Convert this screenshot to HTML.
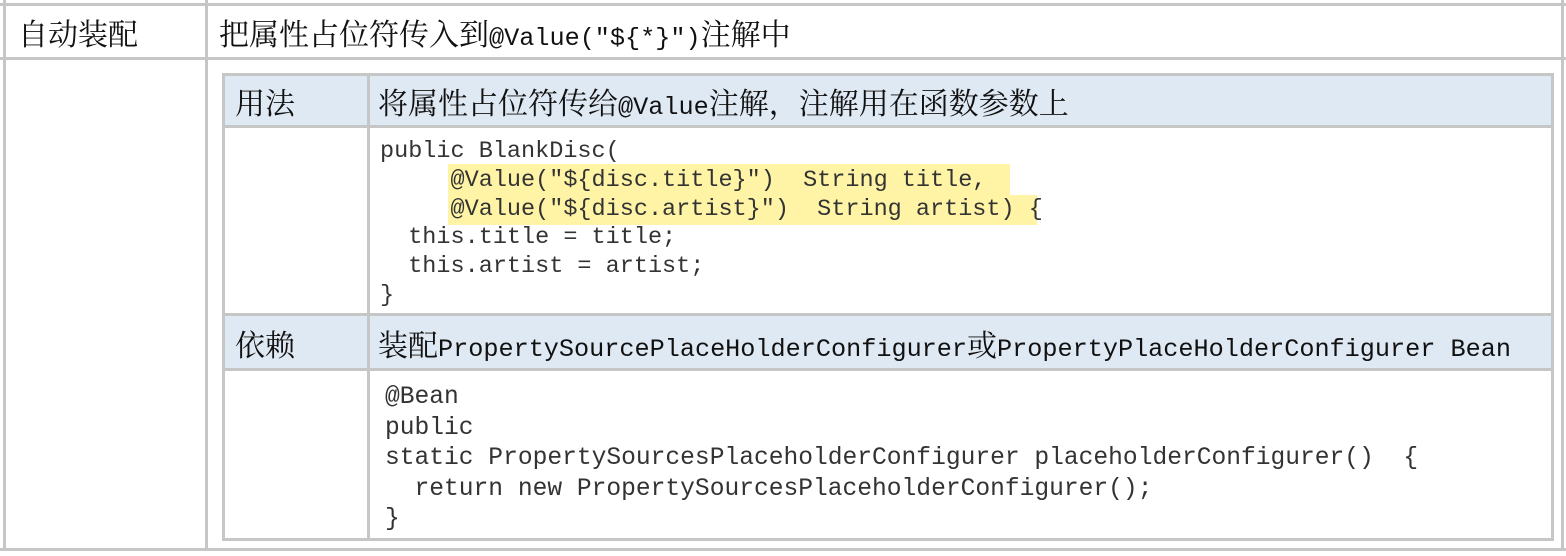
<!DOCTYPE html>
<html><head><meta charset="utf-8"><style>
body{margin:0;width:1566px;height:556px;background:#fff;position:relative;overflow:hidden;font-family:"Liberation Serif","Noto Serif CJK SC",serif;color:#111}
.b{position:absolute;background:#c6c6c6}
.t{position:absolute;font-size:30px;line-height:30px;white-space:pre;font-family:"Noto Serif CJK SC","Noto Sans CJK SC",serif}
.t .l{font-family:"Liberation Mono",monospace;font-size:25.2px}
.c{position:absolute;font-family:"Liberation Mono",monospace;white-space:pre;color:#333}
.hl{position:absolute;background:#fff4a6}
</style></head><body>
<div style="position:absolute;left:225px;top:76px;width:1326px;height:49px;background:#dfe9f4"></div>
<div style="position:absolute;left:225px;top:316px;width:1326px;height:52px;background:#dfe9f4"></div>
<div class="b" style="left:0;top:3px;width:1566px;height:3px"></div>
<div class="b" style="left:0;top:57px;width:1566px;height:3px"></div>
<div class="b" style="left:0;top:548px;width:1566px;height:3px"></div>
<div class="b" style="left:3px;top:0;width:3px;height:551px"></div>
<div class="b" style="left:205px;top:0;width:3px;height:551px"></div>
<div class="b" style="left:1561px;top:0;width:3px;height:551px"></div>
<div class="b" style="left:222px;top:73px;width:1332px;height:3px"></div>
<div class="b" style="left:222px;top:125px;width:1332px;height:3px"></div>
<div class="b" style="left:222px;top:313px;width:1332px;height:3px"></div>
<div class="b" style="left:222px;top:368px;width:1332px;height:3px"></div>
<div class="b" style="left:222px;top:538px;width:1332px;height:3px"></div>
<div class="b" style="left:222px;top:73px;width:3px;height:468px"></div>
<div class="b" style="left:367px;top:73px;width:3px;height:468px"></div>
<div class="b" style="left:1551px;top:73px;width:3px;height:468px"></div>
<div class="t" style="left:18px;top:17px">自动装配</div>
<div class="t" style="left:219px;top:17px">把属性占位符传入到<span class="l">@Value("${*}")</span>注解中</div>
<div class="t" style="left:235px;top:86px">用法</div>
<div class="t" style="left:378px;top:86px">将属性占位符传给<span class="l">@Value</span>注解，注解用在函数参数上</div>
<div class="t" style="left:235px;top:328px">依赖</div>
<div class="t" style="left:378px;top:328px">装配<span class="l">PropertySourcePlaceHolderConfigurer</span>或<span class="l">PropertyPlaceHolderConfigurer Bean</span></div>
<div class="hl" style="left:448px;top:164px;width:562px;height:31px"></div>
<div class="hl" style="left:448px;top:195px;width:589px;height:30px"></div>
<div class="c" style="left:380px;top:138px;font-size:23.5px;line-height:28.8px">public BlankDisc(
     @Value("${disc.title}")  String title,
     @Value("${disc.artist}")  String artist) {
  this.title = title;
  this.artist = artist;
}</div>
<div class="c" style="left:385px;top:383px;font-size:24.6px;line-height:30.5px">@Bean
public
static PropertySourcesPlaceholderConfigurer placeholderConfigurer()  {
  return new PropertySourcesPlaceholderConfigurer();
}</div>
</body></html>
